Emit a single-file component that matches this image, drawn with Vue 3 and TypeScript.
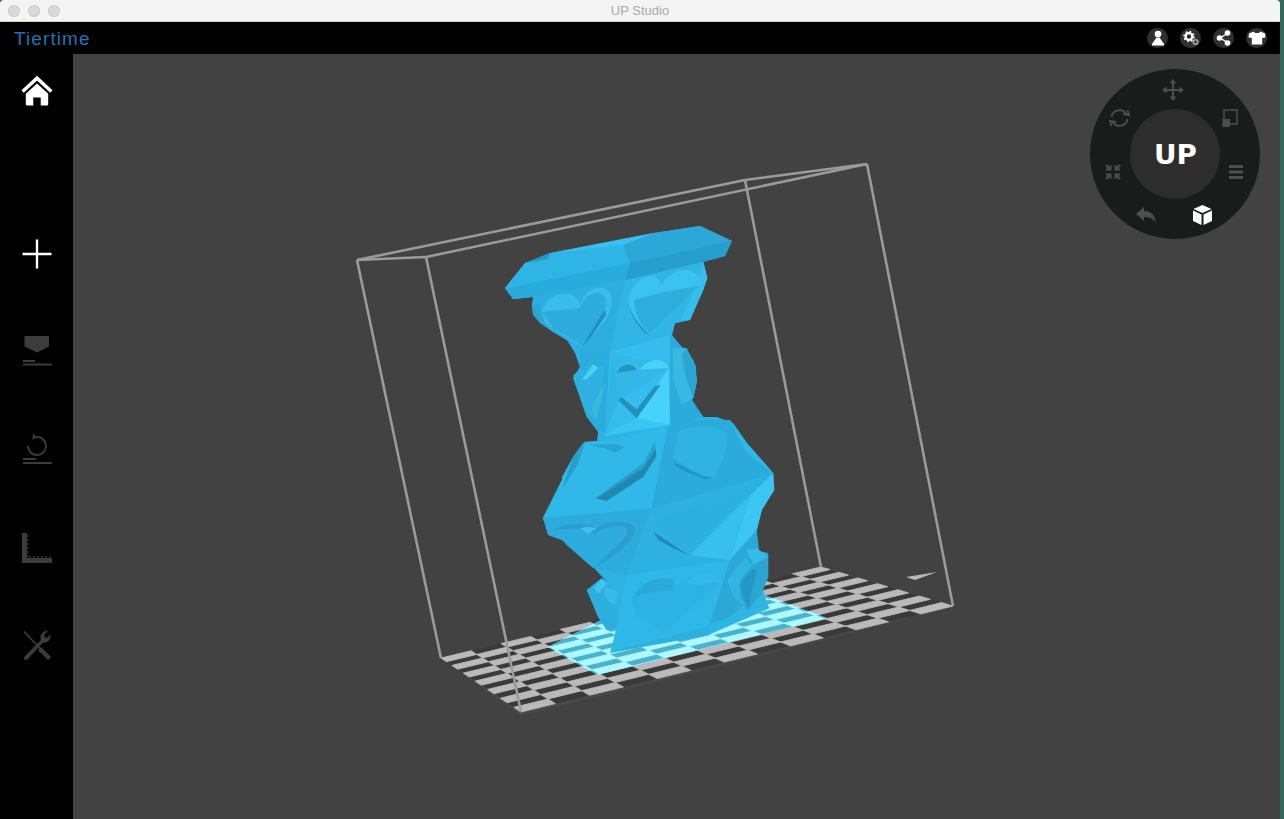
<script setup lang="ts">
type Pt = [number, number]
type Facet = { d: string; fill: string }

const A: Pt = [441, 658]
const D: Pt = [821, 567]
const C: Pt = [953, 606]
const B: Pt = [521, 712]

const sx = A[0] - D[0] + C[0] - B[0]
const sy = A[1] - D[1] + C[1] - B[1]
const dx1 = D[0] - C[0]
const dy1 = D[1] - C[1]
const dx2 = B[0] - C[0]
const dy2 = B[1] - C[1]
const det = dx1 * dy2 - dx2 * dy1
const g = (sx * dy2 - dx2 * sy) / det
const h = (dx1 * sy - sx * dy1) / det
const a0 = D[0] - A[0] + g * D[0]
const b0 = B[0] - A[0] + h * B[0]
const d0 = D[1] - A[1] + g * D[1]
const e0 = B[1] - A[1] + h * B[1]

function project(u: number, v: number): string {
  const w = g * u + h * v + 1
  const x = (a0 * u + b0 * v + A[0]) / w
  const y = (d0 * u + e0 * v + A[1]) / w
  return `${x.toFixed(1)},${y.toFixed(1)}`
}

const COLS = 13
const ROWS = 13
const cells: string[] = []
for (let r = 0; r < ROWS; r++) {
  for (let c = 0; c < COLS; c++) {
    if ((r + c) % 2 === 0) {
      cells.push(
        [
          project(c / COLS, r / ROWS),
          project((c + 1) / COLS, r / ROWS),
          project((c + 1) / COLS, (r + 1) / ROWS),
          project(c / COLS, (r + 1) / ROWS),
        ].join(' '),
      )
    }
  }
}

const boxLines: [number, number, number, number][] = [
  [357, 260, 441, 658],
  [426, 257, 521, 712],
  [867, 164, 953, 606],
  [745, 180, 821, 567],
  [357, 260, 745, 180],
  [426, 257, 867, 164],
  [357, 260, 426, 257],
  [745, 180, 867, 164],
]

const silhouette =
  '505,288 525,263 550,253 653,233 700,226 732,241 725,256 703,262 702,270 707,278 703,290 690,320 675,323 672,335 680,345 693,360 697,380 692,400 703,417 717,417 733,423 747,443 773,473 774,490 762,510 757,530 753,550 768,553 768,573 763,590 748,610 708,635 610,653 617,627 607,630 598,617 587,590 602,578 608,583 593,567 570,543 548,535 543,518 562,490 562,477 573,457 583,443 597,442 598,433 605,433 597,430 587,417 573,378 580,367 575,353 567,340 550,330 533,315 532,305 533,297 513,299'

const upper: Facet[] = [
  { d: 'M130 230L405 180 360 395 270 390 230 360 180 330 130 285Z', fill: '#2cafdf' },
  { d: 'M405 180L640 125 652 175 600 300 555 310 545 345 360 395Z', fill: '#30b5e5' },
  { d: 'M640 125L652 175 640 210 600 300 570 300 625 190Z', fill: '#36bdec' },
  { d: 'M125 255L155 250 150 280 180 330 150 310 130 285Z', fill: '#2aa6d4' },
  { d: 'M45 205L105 130 180 100 400 75 420 130Z', fill: '#2fb5e5' },
  { d: 'M105 130L180 100 172 118Z', fill: '#2598c4' },
  { d: 'M180 100L490 40 400 75Z', fill: '#38c0ef' },
  { d: 'M400 75L490 40 630 18 725 62 420 130Z', fill: '#2ba8d7' },
  { d: 'M45 205L420 130 405 180 130 230 70 238Z', fill: '#29abdc' },
  { d: 'M420 130L725 62 705 108 640 125 405 180Z', fill: '#279ecb' },
  { d: 'M270 390L360 395 345 640 320 630 290 590 250 475 270 440Z', fill: '#2aaddd' },
  { d: 'M360 395L540 345 540 615 345 650Z', fill: '#35beed' },
  { d: 'M365 395L535 445 385 545Z', fill: '#31b8e8' },
  { d: 'M535 445L540 615 440 595Z', fill: '#47d2f9' },
  { d: 'M365 400L385 545 345 645Z', fill: '#2eb4e5' },
  { d: 'M345 645L440 595 540 615Z', fill: '#3bc5f3' },
  { d: 'M540 345L570 375 610 420 620 480 605 540 640 590 540 615Z', fill: '#2babdb' },
  // Left upper heart
  { d: 'M155 272C170 235 205 215 240 222C258 228 266 240 270 254C285 205 335 190 358 215C375 240 362 275 340 310L275 382 L165 310Z', fill: '#39bdeb' },
  { d: 'M155 275L268 265C285 225 325 200 345 232C358 262 320 320 278 378L190 325Z', fill: '#2dadde' },
  { d: 'M275 382L345 268 348 285 300 355Z', fill: '#2290b9' },
  // Right upper heart
  { d: 'M415 245C420 190 470 155 500 172L515 195C540 150 600 130 628 175L630 197 480 345C450 320 420 285 415 245Z', fill: '#3ac2f0' },
  { d: 'M432 240L510 218 628 197 480 342C455 320 432 280 432 240Z', fill: '#2eaedd' },
  { d: 'M415 245C420 280 450 320 480 345L465 338C440 315 420 280 415 245Z', fill: '#2290ba' },
  // Middle heart
  { d: 'M375 460C385 420 430 410 445 445C460 405 515 390 537 430L535 445 450 452Z', fill: '#35bbe8' },
  { d: 'M380 458C395 430 425 425 440 450Z', fill: '#2794be' },
  { d: 'M450 448C470 420 510 410 530 432L535 445Z', fill: '#4ad3f7' },
  { d: 'M385 540L440 595 512 495 495 498 440 568 395 532Z', fill: '#2391b9' },
  // Side heart right
  { d: 'M545 380L590 385 618 440 620 490 610 535 575 555 548 480Z', fill: '#2caedd' },
  { d: 'M548 385L590 385 575 400 585 470 610 535 575 555 550 480Z', fill: '#38b9e4' },
  { d: 'M590 385L618 440 618 495 610 535 588 465 578 405Z', fill: '#2ba6d3' },
  // Side bump left
  { d: 'M250 465L300 430 345 440 330 540 315 600 285 570Z', fill: '#2eb1e0' },
  { d: 'M275 480L310 432 325 445 290 478Z', fill: '#4ccff5' },
  { d: 'M305 560L345 490 332 550 318 600Z', fill: '#3ab8de' },
]

const lower: Facet[] = [
  { d: 'M38 295L130 110 165 65 235 60 415 15 365 265Z', fill: '#2fb8e8' },
  { d: 'M95 210L130 110 165 65 145 130Z', fill: '#2a9dc9' },
  { d: 'M235 60L415 15 415 0 190 0 205 40Z', fill: '#2cb2e3' },
  { d: 'M415 15L415 0 600 0 650 70 730 160 365 265Z', fill: '#2babdb' },
  { d: 'M600 0L650 70 730 160 650 100Z', fill: '#30b8e7' },
  { d: 'M730 160L733 210 695 270 680 330 600 420 660 225Z', fill: '#3bc6f4' },
  { d: 'M38 295L365 265 290 465 195 445 120 370 60 345Z', fill: '#2bacdd' },
  { d: 'M365 265L730 160 660 225 600 420 290 465Z', fill: '#2cb1e1' },
  { d: 'M660 225L600 420 480 405Z', fill: '#37c0ee' },
  { d: 'M290 465L600 420 535 620 245 695Z', fill: '#2fb7e7' },
  { d: 'M600 420L540 610 600 590 700 500 680 330Z', fill: '#2ba8d6' },
  { d: 'M535 620L600 590 700 510 705 530 718 565 535 645Z', fill: '#2eb5e4' },
  { d: 'M245 695L535 620 535 645Z', fill: '#2dafe0' },
  { d: 'M600 420L535 620 555 560Z', fill: '#47d2f9' },
  // Crescent heart
  { d: 'M195 235L340 130 375 65 378 110 340 170 230 242Z', fill: '#2a9ecb' },
  { d: 'M200 236L340 145 378 85 378 110 340 170 230 242Z', fill: '#2288b0' },
  { d: 'M180 75L255 72 285 82 255 98 225 85Z', fill: '#29a3d0' },
  // Right-top heart ghost
  { d: 'M445 35C470 15 560 10 590 40C600 80 570 140 550 175C500 160 450 130 430 110Z', fill: '#2eb3e2' },
  { d: 'M430 125L520 170 552 172 525 178 470 155 440 140Z', fill: '#2394bd' },
  // Lower-left heart
  { d: 'M70 330L315 325 300 370 190 445 110 375Z', fill: '#2dadde' },
  { d: 'M70 330C100 310 170 305 200 325C230 300 300 295 315 325C310 370 250 410 190 445L240 395C275 365 300 345 290 325C270 310 210 325 195 342L150 325Z', fill: '#2a9fcc' },
  { d: 'M150 325L175 320 200 325 175 342Z', fill: '#3dc2ef' },
  // Centre heart
  { d: 'M370 335C400 280 470 255 520 260L530 275C590 235 650 215 660 225L480 405 420 375Z', fill: '#2db0e0' },
  { d: 'M370 335L475 405 430 385 385 360Z', fill: '#2389b0' },
  // Bottom heart
  { d: 'M305 540C325 490 380 465 430 480L425 510C470 465 560 435 568 490L405 635 320 590Z', fill: '#2db3e3' },
  { d: 'M305 540C325 490 380 465 430 478L430 510 340 520Z', fill: '#2aa9d8' },
  { d: 'M470 490C500 450 550 445 568 485L500 495Z', fill: '#32bbea' },
  // Bottom-left lobe
  { d: 'M170 510L215 475 240 490 265 530 258 625 230 630 205 590Z', fill: '#2cafdd' },
  { d: 'M215 478L232 490 205 520 190 505Z', fill: '#3fc5f1' },
  { d: 'M225 500L262 515 260 555 240 550 220 520Z', fill: '#37bce9' },
  // Right lobe
  { d: 'M590 490L625 435 660 410 715 400 715 470 695 520 655 570 610 530Z', fill: '#2aa6d4' },
  { d: 'M590 480L645 415 670 435 630 480 630 530 655 570 610 530Z', fill: '#30b4e2' },
  { d: 'M650 390L680 385 715 410 670 435Z', fill: '#35bde9' },
  { d: 'M630 500C640 470 670 440 680 450C670 490 660 540 655 570Z', fill: '#2498c2' },
]
</script>

<template>
  <div class="window">
    <div class="titlebar">
      <div class="lights">
        <span class="light"></span>
        <span class="light"></span>
        <span class="light"></span>
      </div>
      <span class="title">UP Studio</span>
    </div>

    <header class="topbar">
      <span class="logo">Tiertime</span>
      <div class="pills">
        <span class="pill">
          <svg width="14" height="16" viewBox="0 0 14 16">
            <circle cx="7" cy="4" r="3.3" fill="#fff" />
            <path d="M5.500 7.500h3L13 14v1.500H1V14z" fill="#fff" />
          </svg>
        </span>
        <span class="pill">
          <svg width="18" height="16" viewBox="0 0 18 16">
            <circle cx="7" cy="6.500" r="3.400" fill="none" stroke="#fff" stroke-width="2.400" />
            <circle cx="7" cy="6.500" r="5" fill="none" stroke="#fff" stroke-width="1.500" stroke-dasharray="1.800 2.100" />
            <circle cx="13.500" cy="12" r="2.200" fill="none" stroke="#aaa" stroke-width="1.500" />
          </svg>
        </span>
        <span class="pill">
          <svg width="16" height="16" viewBox="0 0 16 16">
            <path d="M11.500 3.500L4 8l7.500 4.500" fill="none" stroke="#fff" stroke-width="1.400" />
            <circle cx="11.500" cy="3" r="2.800" fill="#fff" />
            <circle cx="3.500" cy="8" r="2.800" fill="#fff" />
            <circle cx="11.500" cy="13" r="2.800" fill="#fff" />
          </svg>
        </span>
        <span class="pill">
          <svg width="18" height="14" viewBox="0 0 18 14">
            <path d="M5.500 0.500L1 2.500 0.500 6.500 3.800 7V13.500H14.200V7L17.500 6.500 17 2.500 12.500 0.500C11.500 2.500 6.500 2.500 5.500 0.500Z" fill="#fff" />
          </svg>
        </span>
      </div>
    </header>

    <div class="body">
      <nav class="sidebar">
        <button class="tool home">
          <svg width="32" height="32" viewBox="0 0 30 30">
            <path d="M1.500 15.500L15 3 28.500 15.500" fill="none" stroke="#fff" stroke-width="3.200" />
            <path d="M15 8L25.500 17.500V27.500a1 1 0 0 1-1 1H18.500V21H11.500V28.500H5.500a1 1 0 0 1-1-1V17.500Z" fill="#fff" />
          </svg>
        </button>
        <button class="tool">
          <svg width="30" height="30" viewBox="0 0 30 30">
            <path d="M0.500 15H29.500M15 0.500V29.500" stroke="#fff" stroke-width="2.400" />
          </svg>
        </button>
        <button class="tool">
          <svg width="30" height="34" viewBox="0 0 30 34">
            <path d="M2.500 1H27V11.500L15 17.500 2.500 11.500Z" fill="#3c3c3c" />
            <path d="M1 26H13M1 29.500H30" stroke="#3c3c3c" stroke-width="1.800" />
          </svg>
        </button>
        <button class="tool">
          <svg width="30" height="40" viewBox="0 0 30 40">
            <path d="M12 7.500A9 9 0 1 1 6 16" fill="none" stroke="#3c3c3c" stroke-width="1.800" />
            <path d="M11 3L15 7.500 10.500 10Z" fill="#3c3c3c" />
            <path d="M1 29H14M1 33H30" stroke="#3c3c3c" stroke-width="1.800" />
          </svg>
        </button>
        <button class="tool">
          <svg width="30" height="30" viewBox="0 0 30 30">
            <path d="M0 0H5V25H30V30H0Z" fill="#3c3c3c" />
            <path d="M5 3H7M5 7H7M5 11H7M5 15H7M5 19H7M5 23H7M8 25V23M12 25V23M16 25V23M20 25V23M24 25V23M28 25V23" stroke="#3c3c3c" stroke-width="1.200" />
          </svg>
        </button>
        <button class="tool">
          <svg width="30" height="32" viewBox="0 0 30 32">
            <path d="M2 1.500L27 28" stroke="#3c3c3c" stroke-width="1.800" />
            <path d="M16 20L20 24 26 30 29 27 23 21 19 17Z" fill="#3c3c3c" />
            <path d="M3 26L19 10C17 5 21 0.500 26 0.500L22 5 24 8.500 28.500 5C29 10 25 13.500 21 12.500L5.500 29.500C3 31 0.500 28.500 3 26Z" fill="#3c3c3c" />
          </svg>
        </button>
      </nav>

      <main class="viewport">
        <svg class="scene" viewBox="73 54 1207 765" preserveAspectRatio="xMinYMin">
          <defs>
            <clipPath id="shadow-clip">
              <polygon points="547,647 597,675 828,618 765,595 700,590 620,610" />
            </clipPath>
          </defs>

          <polygon points="441,658 521,716 953,607 821,566" class="plate" />
          <polygon points="441,658 521,712 953,606 821,567" class="plate-dark" />
          <polygon v-for="(c, i) in cells" :key="'c' + i" :points="c" class="cell" />
          <g clip-path="url(#shadow-clip)">
            <polygon points="547,647 597,675 828,618 765,595 700,590 620,610" class="shadow" />
            <polygon v-for="(c, i) in cells" :key="'s' + i" :points="c" class="shadow-cell" />
          </g>
          <polygon points="906,577 937,572 915,580" class="tri" />

          <line
            v-for="(l, i) in boxLines"
            :key="'l' + i"
            :x1="l[0]"
            :y1="l[1]"
            :x2="l[2]"
            :y2="l[3]"
            class="edge"
          />

          <polygon :points="silhouette" class="model" />
          <g transform="translate(530 420) scale(0.33333)">
            <path v-for="(f, i) in lower" :key="'d' + i" :d="f.d" :fill="f.fill" />
          </g>
          <g transform="translate(490 220) scale(0.33333)">
            <path v-for="(f, i) in upper" :key="'u' + i" :d="f.d" :fill="f.fill" />
          </g>
        </svg>

        <div class="dial">
          <svg width="170" height="170" viewBox="0 0 170 170">
            <circle cx="85" cy="85" r="85" fill="#1a1c1c" />
            <circle cx="85" cy="85" r="45" fill="#2d2d2d" />

            <!-- move -->
            <g transform="translate(83 21)" fill="#4e4e4e" stroke="#4e4e4e">
              <path d="M0 -9V9M-9 0H9" stroke-width="2" fill="none" />
              <path d="M0 -11L-3.500 -6.500H3.500ZM0 11L-3.500 6.500H3.500ZM-11 0L-6.500 -3.500V3.500ZM11 0L6.500 -3.500V3.500Z" stroke="none" />
            </g>
            <!-- rotate -->
            <g transform="translate(29.500 49)" fill="none" stroke="#4e4e4e" stroke-width="1.800">
              <path d="M-8 -1A8 8 0 0 1 7 -3.500" />
              <path d="M8 1A8 8 0 0 1 -7 3.500" />
              <path d="M3.500 -4L9.500 -3 8 -8" />
              <path d="M-3.500 4L-9.500 3 -8 8" />
            </g>
            <!-- scale -->
            <g transform="translate(139 49)">
              <path d="M-5 1V-8H8V6H1" fill="none" stroke="#4e4e4e" stroke-width="1.500" />
              <rect x="-6.500" y="1" width="7.500" height="8" fill="#4e4e4e" />
            </g>
            <!-- compress -->
            <g transform="translate(23 103)" fill="none" stroke="#4e4e4e" stroke-width="2.400">
              <path d="M-7 -7L-3 -3M7 -7L3 -3M-7 7L-3 3M7 7L3 3" />
              <path d="M-7 -2.500H-2.500V-7M7 -2.500H2.500V-7M-7 2.500H-2.500V7M7 2.500H2.500V7" stroke-width="1.800" />
            </g>
            <!-- list -->
            <g transform="translate(146 103)" fill="#4e4e4e">
              <rect x="-7" y="-7" width="14" height="3" />
              <rect x="-7" y="-1.500" width="14" height="3" />
              <rect x="-7" y="4" width="14" height="3" />
            </g>
            <!-- back -->
            <path
              transform="translate(56 146)"
              d="M-10 -1L-2 -8V-4C4 -4 9 -1 10 8C7 3 3 2 -2 2V6Z"
              fill="#4e4e4e"
            />
            <!-- cube -->
            <g transform="translate(112.500 146)" fill="#fff">
              <path d="M0 -10L9 -6 0 -2 -9 -6Z" />
              <path d="M-9.500 -4.500L-1 -0.500V10L-9.500 6Z" />
              <path d="M9.500 -4.500L1 -0.500V10L9.500 6Z" />
            </g>
            <text x="85.500" y="94.500" class="up" textLength="43" lengthAdjust="spacingAndGlyphs">UP</text>
          </svg>
        </div>
      </main>
    </div>
  </div>
</template>

<style>
html,
body {
  margin: 0;
  background: #34675b;
  overflow: hidden;
}
</style>

<style scoped>
.window {
  width: 1280px;
  height: 819px;
  display: flex;
  flex-direction: column;
  font-family: "Liberation Sans", Arial, sans-serif;
}

.titlebar {
  flex: 0 0 22px;
  box-sizing: border-box;
  position: relative;
  display: flex;
  align-items: center;
  justify-content: center;
  background: #f4f4f4;
  border-bottom: 1px solid #d0d0d0;
  border-radius: 4px 4px 0 0;
}

.lights {
  position: absolute;
  left: 8px;
  top: 5px;
  display: flex;
  gap: 8px;
}

.light {
  width: 12px;
  height: 12px;
  border-radius: 50%;
  background: #d8d8d8;
  box-shadow: inset 0 0 0 1px #cecece;
}

.title {
  font-size: 13px;
  color: #a8a8a8;
}

.topbar {
  flex: 0 0 32px;
  display: flex;
  align-items: center;
  justify-content: space-between;
  background: #000;
  padding: 0 13px 0 14px;
}

.logo {
  font-size: 19px;
  letter-spacing: 1.1px;
  color: #1e72b6;
  line-height: 1;
}

.pills {
  display: flex;
  gap: 12px;
}

.pill {
  width: 21px;
  height: 20px;
  border-radius: 10px;
  background: #303030;
  display: flex;
  align-items: center;
  justify-content: center;
}

.body {
  flex: 1;
  display: flex;
  min-height: 0;
}

.sidebar {
  flex: 0 0 73px;
  background: #000;
  display: flex;
  flex-direction: column;
  align-items: center;
  gap: 58px;
  padding-top: 17px;
  box-sizing: border-box;
}

.tool {
  width: 40px;
  height: 40px;
  padding: 0;
  border: 0;
  background: none;
  display: flex;
  align-items: center;
  justify-content: center;
}

.tool.home {
  margin-bottom: 65px;
}

.viewport {
  flex: 1;
  position: relative;
  background: #424242;
  overflow: hidden;
}

.scene {
  display: block;
  width: 100%;
  height: 100%;
}

.plate {
  fill: #494949;
}

.plate-dark {
  fill: #3a3a3a;
}

.cell {
  fill: #bababa;
  stroke: #bababa;
  stroke-width: 0.9;
}

.tri {
  fill: #bababa;
}

.shadow {
  fill: #4ab3cb;
}

.shadow-cell {
  fill: #aef8ff;
  stroke: #aef8ff;
  stroke-width: 0.9;
}

.edge {
  stroke: #9b9b9b;
  stroke-width: 2.600;
}

.model {
  fill: #2db2e2;
}

.dial {
  position: absolute;
  top: 15px;
  right: 20px;
  width: 170px;
  height: 170px;
}

.up {
  font-family: "DejaVu Sans", sans-serif;
  font-weight: 700;
  font-size: 26px;
  fill: #fff;
  text-anchor: middle;
}
</style>
